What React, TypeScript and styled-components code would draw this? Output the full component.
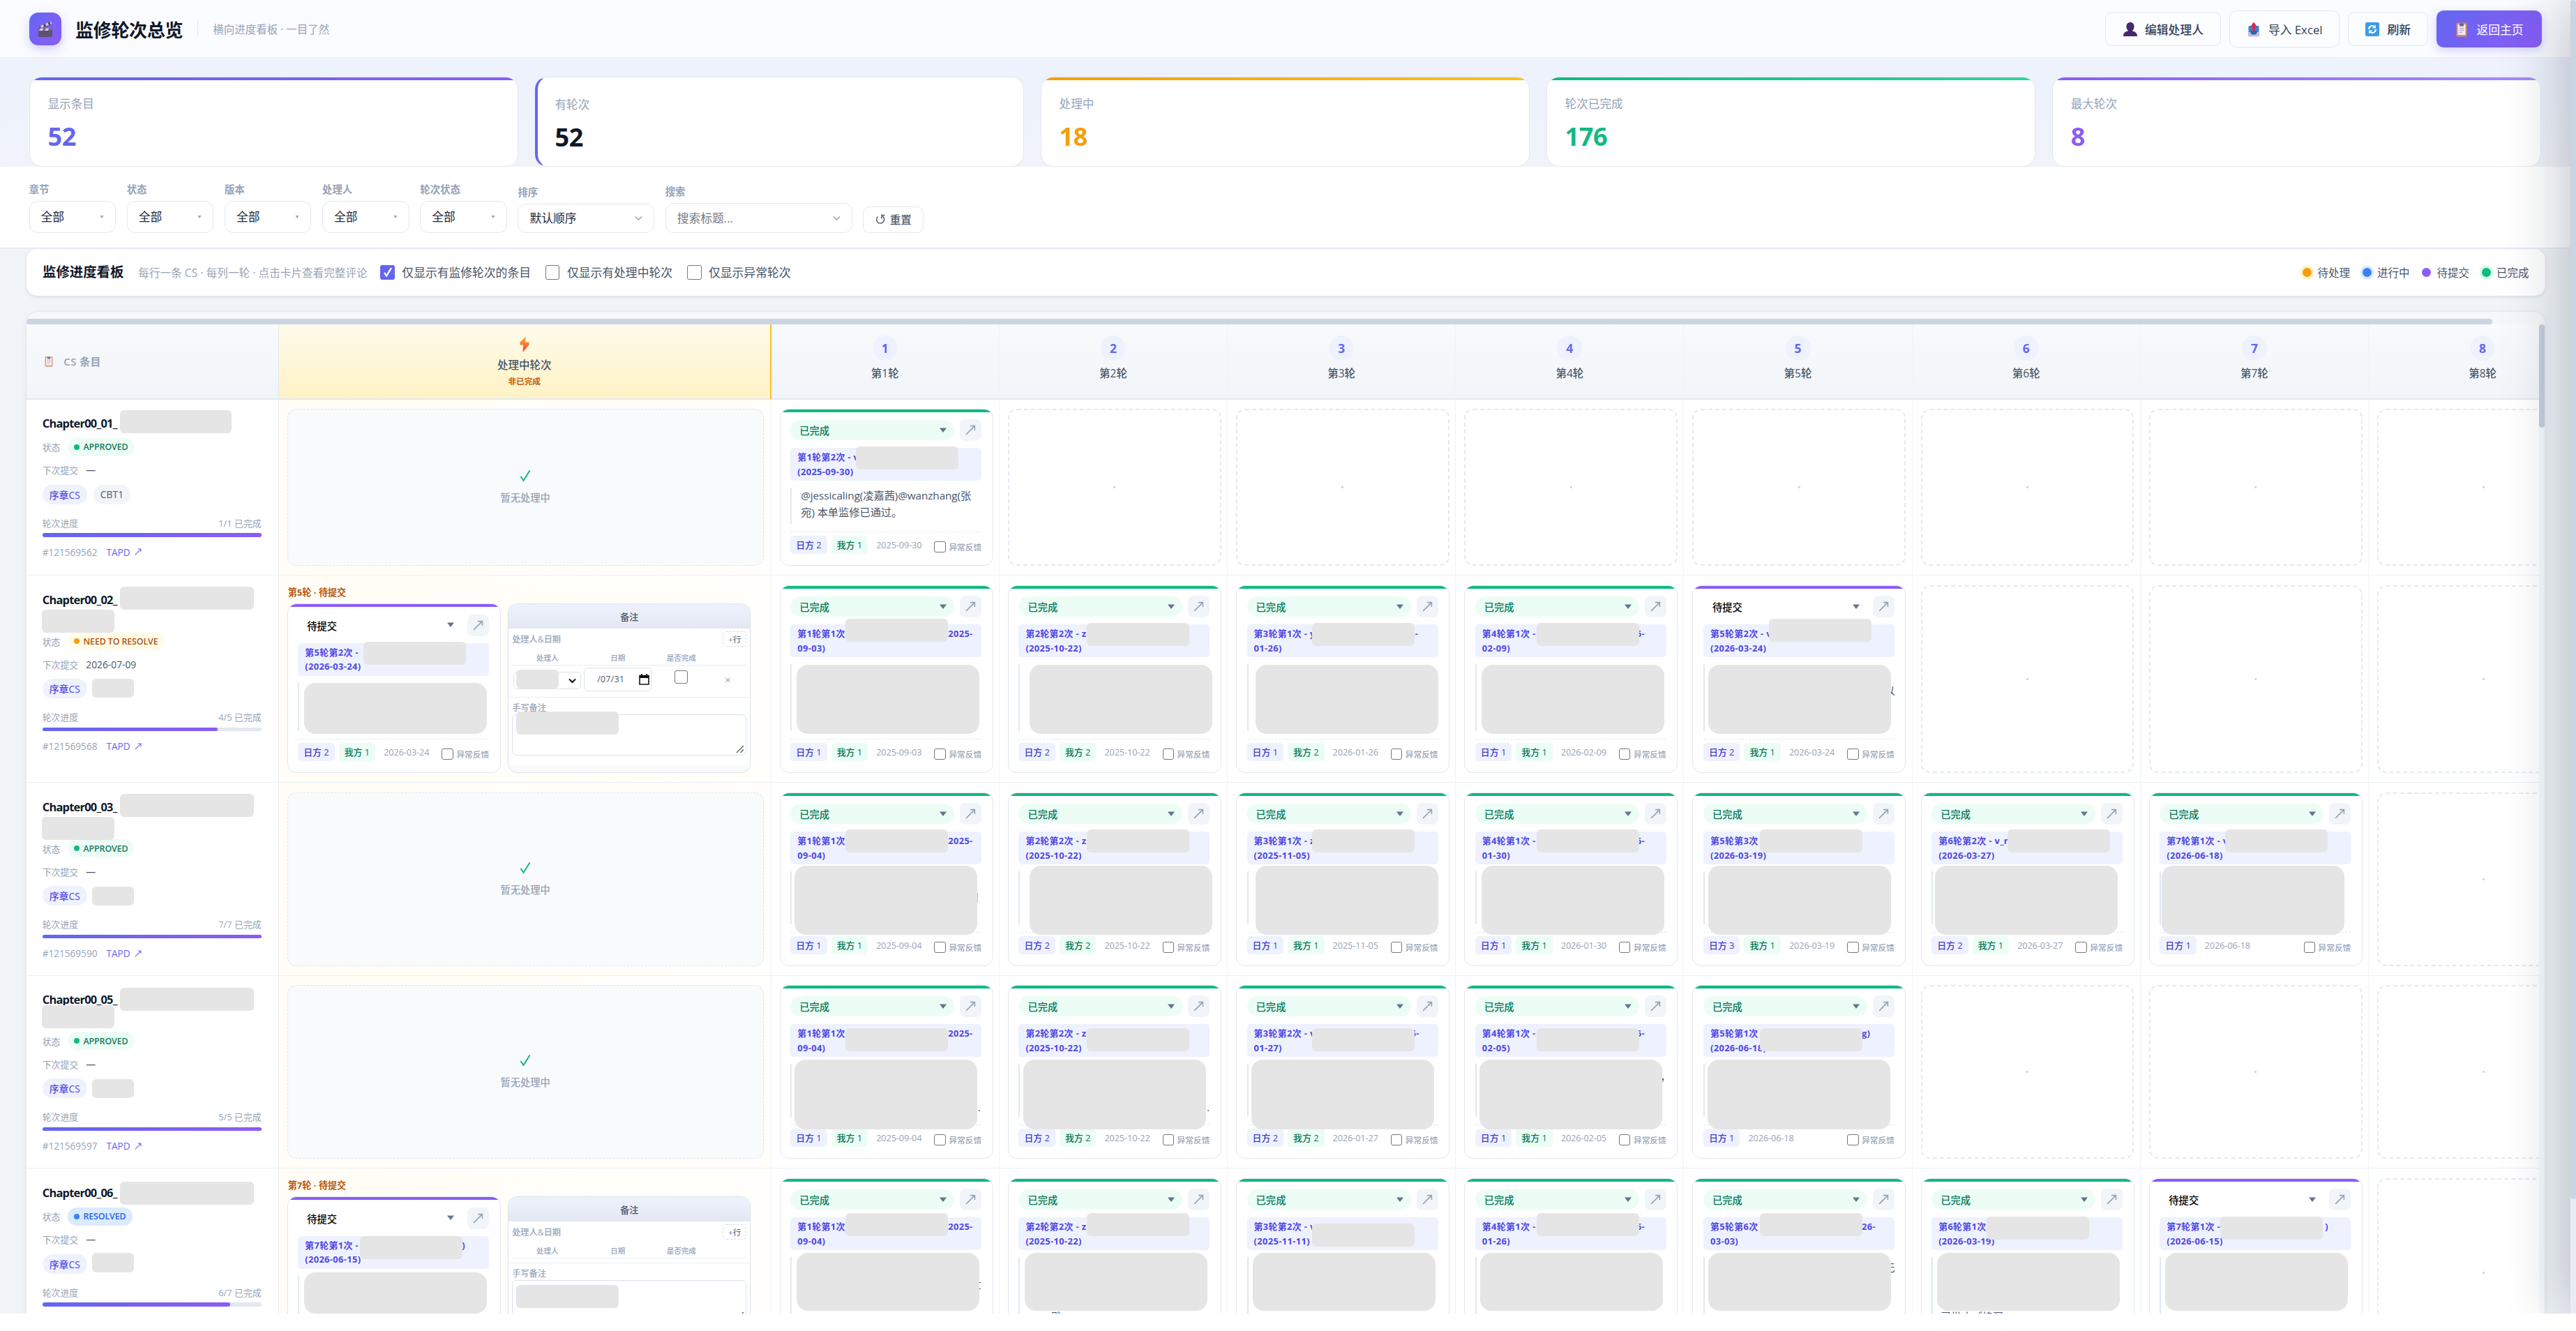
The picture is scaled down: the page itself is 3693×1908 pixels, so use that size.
import React from "react";
import styled, { createGlobalStyle, css } from "styled-components";

const GlobalStyle = createGlobalStyle`
  * { box-sizing: border-box; }
  html, body { margin: 0; padding: 0; background: #fff; }
  body {
    font-family: "Open Sans", "Noto Sans", "Noto Sans CJK SC", sans-serif;
    color: #0f172a;
    overflow: hidden;
  }
`;

/* ---------- page frame ---------- */

const Page = styled.div`
  position: relative;
  width: 3693px;
  height: 1883px;
  overflow: hidden;
  display: flex;
  background: #f1f5f9;
`;

const Main = styled.main`
  width: 3685px;
  flex: none;
  display: flex;
  flex-direction: column;
  background: linear-gradient(180deg, #eef2ff 0, #edf2fc 110px, #f0f3f9 240px, #f0f4f8 400px);
`;

const PageScroll = styled.div`
  width: 8px;
  flex: none;
  background: #e9edf3;
`;

const PageThumb = styled.div`
  height: 1719px;
  border-radius: 4px;
  background: #cbd5e1;
`;

const DrawerShadow = styled.div`
  position: absolute;
  left: 3685px;
  top: 0;
  width: 400px;
  height: 1883px;
  clip-path: inset(-10px 400px -10px -300px);
  box-shadow: -10px 0 78px rgba(15, 23, 42, 0.25);
  pointer-events: none;
`;

/* ---------- header ---------- */

const Header = styled.header`
  height: 83px;
  flex: none;
  display: flex;
  align-items: center;
  padding: 1px 41.5px 0;
  background: #fbfcff;
  border-bottom: 1px solid #e8ecf3;
`;

const Logo = styled.div`
  width: 46.5px;
  height: 46.5px;
  border-radius: 13px;
  display: grid;
  place-items: center;
  background: linear-gradient(135deg, #6366f1, #8b5cf6);
  box-shadow: 0 5px 15px rgba(99, 102, 241, 0.3);
`;

const Title = styled.h1`
  margin: 2px 0 0 20px;
  font-size: 26px;
  line-height: 36px;
  font-weight: 700;
  letter-spacing: -0.3px;
  color: #0f172a;
`;

const Subtitle = styled.span`
  margin-left: 21px;
  padding-left: 21px;
  border-left: 1.3px solid #e2e8f0;
  font-size: 15.5px;
  line-height: 24px;
  color: #94a3b8;
`;

const Actions = styled.div`
  margin-left: auto;
  display: flex;
  align-items: center;
  gap: 11.5px;
`;

const ActionButton = styled.button<{ $w: number; $tall?: boolean; $primary?: boolean; $strong?: boolean }>`
  width: ${(p) => p.$w}px;
  height: ${(p) => (p.$tall ? 53.5 : 48.5)}px;
  padding: 0;
  display: flex;
  align-items: center;
  justify-content: center;
  gap: 10px;
  border-radius: 10px;
  border: 1.3px solid #e2e8f0;
  background: #fcfdff;
  font-family: inherit;
  font-size: 16.8px;
  font-weight: ${(p) => (p.$strong ? 500 : 400)};
  color: #334155;
  white-space: nowrap;
  ${(p) =>
    p.$primary &&
    css`
      border: 0;
      color: #fff;
      background: linear-gradient(135deg, #6366f1, #8b5cf6);
      box-shadow: 0 4px 14px rgba(99, 102, 241, 0.3);
    `}
`;

/* ---------- stats ---------- */

const Stats = styled.section`
  display: grid;
  grid-template-columns: repeat(5, 1fr);
  gap: 23.2px;
  padding: 27px 41.5px 0;
  height: 156px;
  flex: none;
`;

const StatCard = styled.div<{ $bar?: string; $side?: boolean }>`
  height: 129px;
  border: 1.3px solid #e2e8f0;
  border-radius: 18px;
  overflow: hidden;
  padding: ${(p) => (p.$bar ? "0" : "5px")} 26px 0;
  background: #fff;
  ${(p) => p.$side && "border-left: 4px solid #6366f1; padding-left: 25px;"}
  &::before {
    content: "";
    display: ${(p) => (p.$bar ? "block" : "none")};
    height: 5px;
    margin: -1px -27px 1px;
    background: ${(p) => p.$bar};
  }
`;

const StatLabel = styled.div`
  margin-top: 20.5px;
  font-size: 16.6px;
  line-height: 26px;
  color: #94a3b8;
`;

const StatValue = styled.div<{ $c: string }>`
  margin-top: 8px;
  font-size: 36px;
  line-height: 52px;
  font-weight: 700;
  font-family: "Noto Sans", sans-serif;
  letter-spacing: -0.4px;
  color: ${(p) => p.$c};
`;

/* ---------- filters ---------- */

const Filters = styled.section`
  height: 117px;
  flex: none;
  display: flex;
  align-items: flex-end;
  gap: 15.7px;
  padding: 0 41.5px 21px;
  background: #fff;
  border-bottom: 1.5px solid #dfe5ef;
`;

const Field = styled.label<{ $w: number }>`
  width: ${(p) => p.$w}px;
  display: flex;
  flex-direction: column;
  gap: 6px;
  font-size: 14.4px;
  line-height: 20px;
  font-weight: 600;
  color: #94a3b8;
`;

const FieldBox = styled.span<{ $h: number; $muted?: boolean }>`
  height: ${(p) => p.$h}px;
  display: flex;
  align-items: center;
  justify-content: space-between;
  padding: 0 16px;
  border: 1.3px solid #e2e8f0;
  border-radius: 12px;
  background: #fff;
  font-size: 16.8px;
  font-weight: 400;
  color: ${(p) => (p.$muted ? "#757b85" : "#1e293b")};
`;

const ResetButton = styled.button`
  width: 87px;
  height: 38.5px;
  padding: 0;
  display: flex;
  align-items: center;
  justify-content: center;
  gap: 7px;
  border: 1.3px solid #e2e8f0;
  border-radius: 9px;
  background: #fff;
  font: 500 15.5px "Open Sans", "Noto Sans CJK SC", sans-serif;
  color: #475569;
`;

/* ---------- board toolbar ---------- */

const Toolbar = styled.section`
  height: 67.5px;
  flex: none;
  margin: 0.5px 36.5px 0 38px;
  padding: 0 23px;
  display: flex;
  align-items: center;
  border-radius: 15px;
  background: #fff;
  box-shadow: 0 1.3px 4px rgba(15, 23, 42, 0.1);
`;

const ToolbarTitle = styled.h2`
  margin: 0;
  font-size: 19.4px;
  font-weight: 700;
  line-height: 28px;
`;

const ToolbarHint = styled.span`
  width: 326px;
  margin: 0 21px;
  font-size: 15.5px;
  letter-spacing: 0.1px;
  color: #94a3b8;
  white-space: nowrap;
`;

const Check = styled.label`
  display: flex;
  align-items: center;
  gap: 10.5px;
  margin-right: 21px;
  font-size: 16.8px;
  color: #475569;
`;

const Box = styled.span<{ $s: number; $on?: boolean }>`
  width: ${(p) => p.$s}px;
  height: ${(p) => p.$s}px;
  flex: none;
  display: grid;
  place-items: center;
  border-radius: 3px;
  border: ${(p) => (p.$on ? "0" : "1.4px solid #767676")};
  background: ${(p) => (p.$on ? "#6366f1" : "#fff")};
`;

const PersonDone = styled(Box)`
  margin-top: 7px;
`;

const Legend = styled.div`
  margin-left: auto;
  display: flex;
  gap: 18px;
`;

const LegendItem = styled.span<{ $c: string; $ring: string }>`
  display: flex;
  align-items: center;
  gap: 8px;
  font-size: 15.5px;
  color: #475569;
  &::before {
    content: "";
    width: 13px;
    height: 13px;
    border-radius: 50%;
    background: ${(p) => p.$c};
    box-shadow: 0 0 0 3.5px ${(p) => p.$ring};
  }
`;

/* ---------- board ---------- */

const Board = styled.section`
  flex: none;
  margin: 22px 36.5px 0 36.7px;
  height: 1600px;
  border: 1.3px solid #e2e8f0;
  border-radius: 18px;
  overflow: hidden;
  background: #f8fafc;
  box-shadow: 0 2px 8px rgba(15, 23, 42, 0.06);
`;

const TopScroll = styled.div`
  height: 17.7px;
  padding-top: 10px;
  background: #f5f8fa;
`;

const TopThumb = styled.div`
  width: 3535px;
  height: 7.7px;
  border-radius: 4px;
  background: #cbd5e1;
`;

const BoardBody = styled.div`
  display: flex;
`;

const Table = styled.div`
  width: 3602px;
  overflow: hidden;
  background: #fff;
`;

const SideThumb = styled.div`
  width: 8px;
  height: 148px;
  border-radius: 4px;
  background: #c5cfdc;
`;

const RowGrid = styled.div<{ $h: number }>`
  display: grid;
  width: 3686px;
  height: ${(p) => p.$h}px;
  grid-template-columns: 362px 706px repeat(8, 327.2px);
`;

const HeadCell = styled.div<{ $kind?: "item" | "active" }>`
  display: flex;
  flex-direction: column;
  align-items: center;
  padding-top: 16px;
  border-bottom: 2.6px solid #e2e8f0;
  border-right: 1.3px solid #eff3f8;
  background: linear-gradient(180deg, #f8fafc, #f1f5f9);
  font-size: 15.5px;
  line-height: 22px;
  font-weight: 500;
  color: #475569;
  ${(p) =>
    p.$kind === "item" &&
    css`
      flex-direction: row;
      padding: 0 0 0 24px;
      gap: 13.5px;
      color: #94a3b8;
      font-weight: 600;
      border-right-color: #e2e8f0;
      letter-spacing: 0.5px;
      font-size: 14.9px;
    `}
  ${(p) =>
    p.$kind === "active" &&
    css`
      background: linear-gradient(180deg, #fffbeb, #fef3c7 95%);
      border-right: 2px solid #fbbf24;
    `}
`;

const RoundBadge = styled.span`
  width: 36px;
  height: 36px;
  margin-bottom: 7px;
  border-radius: 50%;
  display: grid;
  place-items: center;
  background: #eef2ff;
  font-size: 17.4px;
  font-weight: 700;
  color: #6366f1;
`;

const ActiveTitle = styled.span`
  margin-top: 6px;
`;

const ActiveNote = styled.span`
  margin-top: 4px;
  font-size: 11.6px;
  line-height: 18px;
  font-weight: 700;
  color: #c2590c;
`;

const Cell = styled.div<{ $top: number; $warm?: boolean }>`
  display: flex;
  flex-direction: column;
  padding: ${(p) => p.$top}px 9.5px 12.5px 12px;
  border-right: 1.3px solid #eff3f8;
  border-bottom: 1.3px solid #eaf0f7;
  background: ${(p) => (p.$warm ? "linear-gradient(90deg, #fffdf5, #fffefa)" : "#fff")};
  ${(p) => p.$warm && "padding-right: 10px;"}
`;

const Redact = styled.span<{ $x: number; $y: number; $w: number; $h: number; $r?: number }>`
  position: absolute;
  left: ${(p) => p.$x}px;
  top: ${(p) => p.$y}px;
  width: ${(p) => p.$w}px;
  height: ${(p) => p.$h}px;
  border-radius: ${(p) => p.$r ?? 6}px;
  background: #e5e5e5;
`;

/* item column */

const ItemCell = styled.div<{ $top: number }>`
  position: relative;
  padding: ${(p) => p.$top}px 24px 0 23px;
  border-right: 1.3px solid #e6ebf2;
  border-bottom: 1.3px solid #eaf0f7;
  background: #fff;
`;

const ItemTitle = styled.div<{ $lines: number }>`
  height: ${(p) => p.$lines * 25.5}px;
  font-size: 16.4px;
  line-height: 25px;
  font-weight: 700;
  letter-spacing: -0.75px;
`;

const ItemLine = styled.div<{ $mt: number; $h: number; $size?: number }>`
  margin-top: ${(p) => p.$mt}px;
  height: ${(p) => p.$h}px;
  display: flex;
  align-items: center;
  font-size: ${(p) => p.$size ?? 12.9}px;
  color: #94a3b8;
  white-space: nowrap;
`;

const NextDate = styled.span`
  margin-left: 11px;
  font-size: 13.8px;
  color: #475569;
`;

const ProgressCount = styled.span`
  margin-left: auto;
`;

const statusTones = {
  APPROVED: ["#ecfdf5", "#10b981", "#15795c"],
  "NEED TO RESOLVE": ["#fffbeb", "#f59e0b", "#b45309"],
  RESOLVED: ["#dbeafe", "#3b82f6", "#2563eb"],
} as const;

const StatusPill = styled.span<{ $s: keyof typeof statusTones }>`
  height: 26px;
  margin-left: 11px;
  padding: 0 9px;
  display: flex;
  align-items: center;
  gap: 5px;
  border-radius: 13px;
  background: ${(p) => statusTones[p.$s][0]};
  color: ${(p) => statusTones[p.$s][2]};
  font-size: 12.4px;
  font-weight: 600;
  letter-spacing: -0.1px;
  &::before {
    content: "";
    width: 8px;
    height: 8px;
    border-radius: 50%;
    background: ${(p) => statusTones[p.$s][1]};
  }
`;

const Tag = styled.span<{ $plain?: boolean }>`
  height: 28px;
  padding: 0 10px;
  margin-right: 9px;
  display: flex;
  align-items: center;
  border-radius: 14px;
  font-size: 13.9px;
  font-weight: 500;
  background: ${(p) => (p.$plain ? "#f1f5f9" : "#eef2ff")};
  color: ${(p) => (p.$plain ? "#475569" : "#4f46e5")};
`;

const Track = styled.div`
  margin-top: 6px;
  height: 5.4px;
  border-radius: 3px;
  background: #e2e8f0;
`;

const Fill = styled.div`
  height: 100%;
  border-radius: 3px;
  background: linear-gradient(90deg, #6366f1, #8b5cf6);
`;

const TicketLink = styled.span`
  margin-left: 13px;
  display: flex;
  align-items: center;
  gap: 6px;
  font-weight: 500;
  color: #6366f1;
`;

/* empty states */

const EmptyRound = styled.div`
  flex: 1;
  display: grid;
  place-items: center;
  border: 2px dashed #e4e9f1;
  border-radius: 13px;
  margin-right: -1px;
  &::after {
    content: "";
    width: 3px;
    height: 3px;
    border-radius: 1px;
    background: #cbd5e1;
  }
`;

const EmptyActive = styled.div`
  flex: 1;
  display: flex;
  flex-direction: column;
  align-items: center;
  justify-content: center;
  gap: 11px;
  padding-top: 3px;
  border: 1.3px dashed #dde4ee;
  border-radius: 13px;
  background: #f8fafc;
  font-size: 14.3px;
  line-height: 24px;
  font-weight: 500;
  color: #94a3b8;
`;

/* round card */

const Card = styled.article<{ $c: string }>`
  position: relative;
  width: 306px;
  flex: 1;
  display: flex;
  flex-direction: column;
  padding: 0 15.5px 16px 14.5px;
  border: 1.3px solid #e0e6ef;
  border-radius: 13px;
  overflow: hidden;
  background: #fff;
  &::before {
    content: "";
    flex: none;
    height: 5px;
    margin: -1px -16px 11.3px;
    background: ${(p) => p.$c};
  }
`;

const CardTop = styled.div`
  flex: none;
  height: 30px;
  display: flex;
  align-items: center;
  gap: 8px;
`;

const RoundSelect = styled.div<{ $done: boolean }>`
  flex: 1;
  height: 29px;
  padding: 0 11px 0 13px;
  display: flex;
  align-items: center;
  justify-content: space-between;
  border-radius: 15px;
  background: ${(p) => (p.$done ? "#ecfdf5" : "#fff")};
  color: ${(p) => (p.$done ? "#047857" : "#000")};
  font-size: 14.3px;
  font-weight: 500;
`;

const OpenButton = styled.span`
  width: 31px;
  height: 31px;
  display: grid;
  place-items: center;
  border-radius: 8px;
  background: #f1f5f9;
`;

const CommentHead = styled.div`
  flex: none;
  height: 47px;
  margin-top: 10.5px;
  padding: 3px 10px;
  border-radius: 5px;
  background: #eef2ff;
  font-size: 12.9px;
  line-height: 20.5px;
  font-weight: 700;
  letter-spacing: 0.36px;
  color: #4f46e5;
`;

const HeadLine = styled.div`
  display: flex;
  white-space: pre;
`;

const HeadLead = styled.span<{ $w?: number }>`
  flex: none;
  ${(p) => p.$w && `width: ${p.$w}px;`}
`;

const CommentBody = styled.div`
  flex: 1;
  min-height: 0;
  margin-top: 10px;
  padding: 0 6px 0 13px;
  border-left: 2px solid #e2e8f0;
  font-size: 15.3px;
  line-height: 23.4px;
  letter-spacing: -0.1px;
  white-space: pre;
  color: #475569;
`;

const Peek = styled.span<{ $x: number; $y: number }>`
  position: absolute;
  left: ${(p) => p.$x}px;
  top: ${(p) => p.$y}px;
  font-size: 15px;
  line-height: 20px;
  white-space: nowrap;
  color: #475569;
`;

const CardFoot = styled.div`
  flex: none;
  margin-top: 11px;
  padding-top: 5px;
  height: 32.5px;
  display: flex;
  align-items: center;
  border-top: 1.3px dashed #e2e8f0;
  white-space: nowrap;
`;

const Chip = styled.span<{ $own?: boolean }>`
  height: 26px;
  padding: 0 8px;
  margin-right: 6px;
  display: flex;
  align-items: center;
  border-radius: 5px;
  font-size: 12.9px;
  font-weight: 500;
  background: ${(p) => (p.$own ? "#ecfdf5" : "#eef2ff")};
  color: ${(p) => (p.$own ? "#047857" : "#4338ca")};
`;

const FootDate = styled.span`
  margin-left: 6px;
  font-size: 12.7px;
  letter-spacing: -0.1px;
  color: #94a3b8;
`;

const Abnormal = styled.span`
  margin-left: auto;
  padding-top: 6px;
  display: flex;
  align-items: center;
  gap: 4.5px;
  font-size: 11.7px;
  font-weight: 500;
  color: #94a3b8;
`;

/* in-progress column */

const ActiveLabel = styled.div`
  height: 26.5px;
  flex: none;
  padding-left: 1px;
  font-size: 13.1px;
  line-height: 20px;
  font-weight: 700;
  color: #b9560c;
`;

const ActiveRow = styled.div`
  flex: 1;
  min-height: 0;
  display: flex;
  gap: 10.5px;
  & > article {
    flex: none;
  }
`;

const Notes = styled.div`
  position: relative;
  width: 348px;
  flex: none;
  border: 1.3px solid #dbe2ec;
  border-radius: 13px;
  overflow: hidden;
  background: #f8fafc;
`;

const NotesHead = styled.div`
  height: 35px;
  display: grid;
  place-items: center;
  background: linear-gradient(180deg, #eef2ff, #e2e8f0);
  font-size: 13px;
  font-weight: 500;
  color: #475569;
`;

const NotesBody = styled.div`
  height: 195px;
  padding: 4px 5px 0;
  background: #fff;
  font-size: 12.2px;
  font-weight: 500;
  color: #94a3b8;
`;

const NotesBar = styled.div`
  height: 22px;
  display: flex;
  align-items: center;
  justify-content: space-between;
`;

const AddRow = styled.span`
  width: 34px;
  height: 22px;
  display: grid;
  place-items: center;
  border: 1.2px dashed #d3dbe6;
  border-radius: 5px;
  font-size: 11.6px;
  color: #64748b;
`;

const PeopleGrid = styled.div<{ $h: number; $head?: boolean }>`
  height: ${(p) => p.$h}px;
  display: grid;
  grid-template-columns: 101px 101px 81px 52px;
  align-items: ${(p) => (p.$head ? "center" : "start")};
  justify-items: center;
  font-size: 10.5px;
  ${(p) => p.$head && "border-bottom: 1.3px solid #e8edf4; padding-top: 5px;"}
`;

const PersonSelect = styled.span`
  width: 97px;
  height: 25px;
  margin-top: 9px;
  padding-right: 6px;
  display: flex;
  align-items: center;
  justify-content: flex-end;
  border: 1.3px solid #dbe2ec;
  border-radius: 5px;
`;

const DateInput = styled.span`
  width: 97px;
  height: 34.5px;
  margin-top: 2.5px;
  padding: 0 2px 0 18px;
  display: flex;
  align-items: center;
  justify-content: space-between;
  border: 1.3px solid #dbe2ec;
  border-radius: 5px;
  font-size: 12.2px;
  font-weight: 400;
  letter-spacing: 0.4px;
  color: #475569;
`;

const RemoveMark = styled.span`
  margin-top: 10px;
  font-size: 15px;
  line-height: 20px;
`;

const HandNotes = styled.div`
  margin: 0 -5px;
  padding: 5px 5px 0;
  border-top: 1.3px solid #e8edf4;
  line-height: 19px;
`;

const TextArea = styled.div`
  height: 59.5px;
  display: flex;
  align-items: flex-end;
  justify-content: flex-end;
  padding: 2px;
  border: 1.3px solid #dbe2ec;
  border-radius: 6px;
`;

/* ---------- drawings ---------- */

const Clapper = () => (
  <svg width="20" height="24" viewBox="0 0 20 24">
    <rect x="0" y="10" width="20" height="13" rx="2" fill="#5f5075" />
    <path d="M0 10h20v4H0z" fill="#75658c" />
    <path d="M1 8 17 1l2 4L3 11z" fill="#53456a" />
    <path d="m3 7 4-1.700 1 3.200-4 1.500zm7-3 3.500-1.500 1.500 3.200-4 1.500zm6.500-2.800L18 1l1.500 3.500-2 .5zM3 10.500h4.500L5.500 14H1zm8 0h4.500L13.500 14H9z" fill="#d9cdec" />
  </svg>
);
const Person = () => (
  <svg width="22" height="22" viewBox="0 0 22 22">
    <path d="M11 1c3.400 0 5.600 2.400 5.600 6 0 2.300-.9 4.300-2.200 5.500v1.200c4 .6 6.600 3 6.600 7.300H1c0-4.300 2.600-6.700 6.600-7.300v-1.200C6.300 11.300 5.400 9.300 5.400 7c0-3.600 2.200-6 5.600-6z" fill="#46286e" />
  </svg>
);
const Inbox = () => (
  <svg width="22" height="22" viewBox="0 0 22 22">
    <rect x="3.500" y="6" width="15" height="12" rx="1.500" fill="#2f86d8" />
    <path d="M3 15h16v5a1.500 1.500 0 0 1-1.500 1.500h-13A1.500 1.500 0 0 1 3 20z" fill="#c9bcd6" />
    <path d="M6.500 13h9v3.500l-2 2h-5l-2-2z" fill="#2268b5" />
    <path d="M11 .5 15.500 7H13v6H9V7H6.500z" fill="#e0244f" />
  </svg>
);
const RefreshIcon = () => (
  <svg width="22" height="22" viewBox="0 0 22 22">
    <rect x="1" y="1" width="20" height="20" rx="2.500" fill="#3d9be9" />
    <path d="M6 11a5 5 0 0 1 8.500-3.500M16 11a5 5 0 0 1-8.500 3.500" fill="none" stroke="#fff" strokeWidth="2" />
    <path d="M15.800 4.500v5h-5zM6.200 17.500v-5h5z" fill="#fff" />
  </svg>
);
const Clipboard = ({ size = 22, faded = false }: { size?: number; faded?: boolean }) => (
  <svg width={size} height={size} viewBox="0 0 22 22" opacity={faded ? 0.8 : 1}>
    <rect x="3.500" y="1.500" width="15" height="20" rx="1.500" fill="#d98a5b" />
    <rect x="5.500" y="4" width="11" height="15" fill="#f3ecf7" />
    <path d="M7.500 9.500h7M7.500 12.500h7M7.500 15.500h4.500" stroke="#b9a9c6" strokeWidth="1.300" />
    <path d="M8 3h1.500a1.500 1.500 0 0 1 3 0H14v3.500H8z" fill="#6c5f7d" />
  </svg>
);
const Bolt = () => (
  <svg width="18" height="25" viewBox="0 0 18 25">
    <defs>
      <linearGradient id="bolt" x1="0" y1="0" x2="0" y2="1">
        <stop offset="0" stopColor="#fcb32c" />
        <stop offset="1" stopColor="#f4433f" />
      </linearGradient>
    </defs>
    <path d="M11 1 2.500 9.500V13.500H7L6.500 24 15.500 13.500V9.500H10z" fill="url(#bolt)" />
  </svg>
);
const Caret = () => (
  <svg width="10" height="8" viewBox="0 0 10 8">
    <path d="M0 .5h10L5 7z" fill="#64748b" />
  </svg>
);
const TinyCaret = () => (
  <svg width="6" height="6" viewBox="0 0 6 6">
    <path d="M.5 1h5L3 5z" fill="#94a3b8" />
  </svg>
);
const Chevron = ({ c = "#94a3b8", w = 1.5 }: { c?: string; w?: number }) => (
  <svg width="11" height="8" viewBox="0 0 11 8">
    <path d="m1 1.500 4.500 4.500L10 1.500" fill="none" stroke={c} strokeWidth={w} />
  </svg>
);
const Arrow = ({ s = 15, c = "#94a3b8" }: { s?: number; c?: string }) => (
  <svg width={s} height={s} viewBox="0 0 14 14">
    <path d="M1 13 12.500 1.500M6.500 1.500h6v6" fill="none" stroke={c} strokeWidth="1.500" />
  </svg>
);
const Tick = ({ w, h, c, sw }: { w: number; h: number; c: string; sw: number }) => (
  <svg width={w} height={h} viewBox="0 0 16 18">
    <path d="M1.500 10 5.500 16 14.500 1.500" fill="none" stroke={c} strokeWidth={sw} />
  </svg>
);
const Calendar = () => (
  <svg width="15" height="16" viewBox="0 0 15 16">
    <path d="M1 2.500h13v12.500H1z" fill="none" stroke="#111" strokeWidth="1.600" />
    <path d="M1 2h13v4H1zM3 0h1.800v3H3zm7.200 0H12v3h-1.800z" fill="#111" />
  </svg>
);
const Grip = () => (
  <svg width="12" height="12" viewBox="0 0 12 12">
    <path d="M1 11 11 1M6.500 11 11 6.500" stroke="#555" strokeWidth="1.200" />
  </svg>
);
const ResetArrow = () => (
  <svg width="14" height="16" viewBox="0 0 14 16">
    <path d="M3.500 3.500a5.500 5.500 0 1 0 6.500-.6" fill="none" stroke="#475569" strokeWidth="1.400" />
    <path d="M9 6.500V1.500h4.500" fill="none" stroke="#475569" strokeWidth="1.400" />
  </svg>
);

/* ---------- data ---------- */

const GREEN = "#10b981";
const PURPLE = "#8b5cf6";

type Round = {
  lead: string;
  tail?: string;
  tailAt?: number;
  second: string;
  foot?: { jp: number; own?: number; date: string };
  pending?: boolean;
  name: [number, number];
  body?: [number, number, number];
  text?: string;
  peek?: [string, number, number];
};

type Item = {
  title: string;
  status: keyof typeof statusTones;
  next: string;
  extraTag?: string;
  done: number;
  total: number;
  id?: string;
  height: number;
  top: number;
  masks: [number, number, number, number][];
  active?: { label: string; round: Round; person: boolean };
  rounds: Round[];
};

const items: Item[] = [
  {
    title: "Chapter00_01_", status: "APPROVED", next: "—", extraTag: "CBT1", done: 1, total: 1, id: "#121569562",
    height: 252, top: 13, masks: [[134, 15, 160, 33]],
    rounds: [
      { lead: "第1轮第2次 - v", second: "(2025-09-30)", foot: { jp: 2, own: 1, date: "2025-09-30" }, name: [108, 53], text: "@jessicaling(凌嘉茜)@wanzhang(张\n宛) 本单监修已通过。" },
    ],
  },
  {
    title: "Chapter00_02_", status: "NEED TO RESOLVE", next: "2026-07-09", done: 4, total: 5, id: "#121569568",
    height: 297, top: 14, masks: [[134, 16, 192, 33], [22, 49, 104, 33], [94, 148, 60, 27]],
    active: {
      label: "第5轮 · 待提交", person: true,
      round: { lead: "第5轮第2次 -", tail: ")", tailAt: 225, second: "(2026-03-24)", foot: { jp: 2, own: 1, date: "2026-03-24" }, pending: true, name: [108, 54], body: [23, 113, 73] },
    },
    rounds: [
      { lead: "第1轮第1次", tail: "2025-", tailAt: 216, second: "09-03)", foot: { jp: 1, own: 1, date: "2025-09-03" }, name: [93, 47], body: [23, 113, 99] },
      { lead: "第2轮第2次 - z", second: "(2025-10-22)", foot: { jp: 2, own: 2, date: "2025-10-22" }, name: [112, 53], body: [30, 113, 99] },
      { lead: "第3轮第1次 - y", tail: "-", tailAt: 231, second: "01-26)", foot: { jp: 1, own: 2, date: "2026-01-26" }, name: [108, 53], body: [27, 113, 99] },
      { lead: "第4轮第1次 -", tail: "6-", tailAt: 221, second: "02-09)", foot: { jp: 1, own: 1, date: "2026-02-09" }, name: [103, 53], body: [24, 113, 99] },
      { lead: "第5轮第2次 - v", second: "(2026-03-24)", foot: { jp: 2, own: 1, date: "2026-03-24" }, pending: true, name: [109, 47], body: [22, 113, 99], peek: ["以", 274, 140] },
    ],
  },
  {
    title: "Chapter00_03_", status: "APPROVED", next: "—", done: 7, total: 7, id: "#121569590",
    height: 277, top: 14, masks: [[134, 16, 192, 33], [22, 49, 104, 33], [94, 149, 60, 27]],
    rounds: [
      { lead: "第1轮第1次", tail: "2025-", tailAt: 216, second: "09-04)", foot: { jp: 1, own: 1, date: "2025-09-04" }, name: [93, 52], body: [20, 104, 99], peek: ["日", 270, 139] },
      { lead: "第2轮第2次 - z", second: "(2025-10-22)", foot: { jp: 2, own: 2, date: "2025-10-22" }, name: [112, 52], body: [30, 104, 99] },
      { lead: "第3轮第1次 - z", second: "(2025-11-05)", foot: { jp: 1, own: 1, date: "2025-11-05" }, name: [108, 52], body: [27, 104, 99] },
      { lead: "第4轮第1次 -", tail: "6-", tailAt: 221, second: "01-30)", foot: { jp: 1, own: 1, date: "2026-01-30" }, name: [103, 52], body: [24, 104, 99] },
      { lead: "第5轮第3次", second: "(2026-03-19)", foot: { jp: 3, own: 1, date: "2026-03-19" }, name: [96, 52], body: [22, 104, 99] },
      { lead: "第6轮第2次 - v_n", second: "(2026-03-27)", foot: { jp: 2, own: 1, date: "2026-03-27" }, name: [123, 52], body: [19, 104, 99] },
      { lead: "第7轮第1次 - v", second: "(2026-06-18)", foot: { jp: 1, date: "2026-06-18" }, name: [108, 52], body: [17, 104, 99] },
    ],
  },
  {
    title: "Chapter00_05_", status: "APPROVED", next: "—", done: 5, total: 5, id: "#121569597",
    height: 276, top: 13, masks: [[134, 17, 192, 33], [22, 42, 104, 33], [94, 148, 60, 27]],
    rounds: [
      { lead: "第1轮第1次", tail: "2025-", tailAt: 216, second: "09-04)", foot: { jp: 1, own: 1, date: "2025-09-04" }, name: [93, 61], body: [20, 106, 100], peek: [".", 283, 164] },
      { lead: "第2轮第2次 - z", second: "(2025-10-22)", foot: { jp: 2, own: 2, date: "2025-10-22" }, name: [112, 61], body: [21, 106, 100], peek: [".", 284, 164] },
      { lead: "第3轮第2次 - v", tail: "6-", tailAt: 225, second: "01-27)", foot: { jp: 2, own: 2, date: "2026-01-27" }, name: [108, 61], body: [21, 106, 100] },
      { lead: "第4轮第1次 -", tail: "6-", tailAt: 221, second: "02-05)", foot: { jp: 1, own: 1, date: "2026-02-05" }, name: [103, 61], body: [21, 106, 100], peek: ["，", 280, 120] },
      { lead: "第5轮第1次", tail: "g)", tailAt: 217, second: "(2026-06-18)", foot: { jp: 1, date: "2026-06-18" }, name: [96, 61], body: [21, 106, 100] },
    ],
  },
  {
    title: "Chapter00_06_", status: "RESOLVED", next: "—", done: 6, total: 7,
    height: 300, top: 14, masks: [[134, 19, 192, 33], [94, 121, 60, 28]],
    active: {
      label: "第7轮 · 待提交", person: false,
      round: { lead: "第7轮第1次 -", tail: ")", tailAt: 225, second: "(2026-06-15)", pending: true, name: [103, 56], body: [23, 108, 59] },
    },
    rounds: [
      { lead: "第1轮第1次", tail: "2025-", tailAt: 216, second: "09-04)", name: [93, 49], body: [23, 106, 83], peek: ["忙", 273, 141] },
      { lead: "第2轮第2次 - z", second: "(2025-10-22)", name: [112, 49], body: [23, 106, 83], peek: ["NG: 雕", 31, 187] },
      { lead: "第3轮第2次 - v", second: "(2025-11-11)", name: [108, 64], body: [23, 106, 83] },
      { lead: "第4轮第1次 -", tail: "6-", tailAt: 221, second: "01-26)", name: [103, 49], body: [22, 106, 83] },
      { lead: "第5轮第6次", tail: "26-", tailAt: 217, second: "03-03)", name: [96, 49], body: [22, 106, 83], peek: ["无", 274, 117] },
      { lead: "第6轮第1次", second: "(2026-03-19)", name: [93, 54], body: [22, 106, 83], peek: ["习世广《终洞", 27, 187] },
      { lead: "第7轮第1次 -", tail: ")", tailAt: 227, second: "(2026-06-15)", pending: true, name: [101, 54], body: [22, 106, 83] },
    ],
  },
];

const stats = [
  { label: "显示条目", value: "52", c: "#6366f1", bar: "linear-gradient(90deg,#6366f1,#8b5cf6)" },
  { label: "有轮次", value: "52", c: "#0f172a" },
  { label: "处理中", value: "18", c: "#f59e0b", bar: "linear-gradient(90deg,#f59e0b,#fbbf24)" },
  { label: "轮次已完成", value: "176", c: "#10b981", bar: "linear-gradient(90deg,#10b981,#34d399)" },
  { label: "最大轮次", value: "8", c: "#8b5cf6", bar: "linear-gradient(90deg,#8b5cf6,#a78bfa)" },
];

/* ---------- composed parts ---------- */

const RoundCard = ({ r }: { r: Round }) => (
  <Card $c={r.pending ? PURPLE : GREEN}>
    <CardTop>
      <RoundSelect $done={!r.pending}>
        {r.pending ? "待提交" : "已完成"}
        <Caret />
      </RoundSelect>
      <OpenButton>
        <Arrow />
      </OpenButton>
    </CardTop>
    <CommentHead>
      <HeadLine>
        <HeadLead $w={r.tailAt}>{r.lead}</HeadLead>
        {r.tail}
      </HeadLine>
      <HeadLine>{r.second}</HeadLine>
    </CommentHead>
    <CommentBody>{r.text}</CommentBody>
    {r.foot && (
      <CardFoot>
        <Chip>日方 {r.foot.jp}</Chip>
        {r.foot.own && <Chip $own>我方 {r.foot.own}</Chip>}
        <FootDate>{r.foot.date}</FootDate>
        <Abnormal>
          <Box $s={16.5} />
          异常反馈
        </Abnormal>
      </CardFoot>
    )}
    {r.peek && <Peek $x={r.peek[1]} $y={r.peek[2]}>{r.peek[0]}</Peek>}
    <Redact $x={r.name[0]} $y={r.name[1]} $w={147} $h={33} />
    {r.body && <Redact $x={r.body[0]} $y={r.body[1]} $w={262} $h={r.body[2]} $r={16} />}
  </Card>
);

const NotesPanel = ({ person }: { person: boolean }) => (
  <Notes>
    <NotesHead>备注</NotesHead>
    <NotesBody>
      <NotesBar>
        处理人&amp;日期
        <AddRow>+行</AddRow>
      </NotesBar>
      <PeopleGrid $h={27} $head>
        <span>处理人</span>
        <span>日期</span>
        <span>是否完成</span>
      </PeopleGrid>
      <PeopleGrid $h={person ? 44.5 : 6}>
        {person && (
          <>
            <PersonSelect>
              <Chevron c="#111" w={2} />
            </PersonSelect>
            <DateInput>
              /07/31
              <Calendar />
            </DateInput>
            <PersonDone $s={18.5} />
            <RemoveMark>×</RemoveMark>
          </>
        )}
      </PeopleGrid>
      <HandNotes>
        手写备注
        <TextArea>
          <Grip />
        </TextArea>
      </HandNotes>
    </NotesBody>
    {person && <Redact $x={11} $y={94} $w={61} $h={27} />}
    <Redact $x={11} $y={person ? 154 : 126} $w={147} $h={33} />
  </Notes>
);

const ItemInfo = ({ it }: { it: Item }) => (
  <ItemCell $top={it.top + 8.5}>
    <ItemTitle $lines={it.masks.length === 3 ? 2 : 1}>{it.title}</ItemTitle>
    <ItemLine $mt={8} $h={26}>
      状态<StatusPill $s={it.status}>{it.status}</StatusPill>
    </ItemLine>
    <ItemLine $mt={9} $h={22}>
      下次提交<NextDate>{it.next}</NextDate>
    </ItemLine>
    <ItemLine $mt={10} $h={28}>
      <Tag>序章CS</Tag>
      {it.extraTag && <Tag $plain>{it.extraTag}</Tag>}
    </ItemLine>
    <ItemLine $mt={17.5} $h={18}>
      轮次进度<ProgressCount>{it.done}/{it.total} 已完成</ProgressCount>
    </ItemLine>
    <Track>
      <Fill style={{ width: `${(it.done / it.total) * 100}%` }} />
    </Track>
    {it.id && (
      <ItemLine $mt={11.5} $h={20} $size={13.6}>
        {it.id}
        <TicketLink>
          TAPD <Arrow s={10} c="#6366f1" />
        </TicketLink>
      </ItemLine>
    )}
    {it.masks.map(([x, y, w, h], i) => (
      <Redact key={i} $x={x} $y={y} $w={w} $h={h} />
    ))}
  </ItemCell>
);

export default function App() {
  return (
    <>
      <GlobalStyle />
      <Page>
        <Main>
          <Header>
            <Logo>
              <Clapper />
            </Logo>
            <Title>监修轮次总览</Title>
            <Subtitle>横向进度看板 · 一目了然</Subtitle>
            <Actions>
              <ActionButton $w={166} $strong><Person />编辑处理人</ActionButton>
              <ActionButton $w={158.5} $tall><Inbox />导入 Excel</ActionButton>
              <ActionButton $w={115.5} $strong><RefreshIcon />刷新</ActionButton>
              <ActionButton $w={151} $tall $primary><Clipboard />返回主页</ActionButton>
            </Actions>
          </Header>

          <Stats>
            {stats.map((s) => (
              <StatCard key={s.label} $bar={s.bar} $side={!s.bar}>
                <StatLabel>{s.label}</StatLabel>
                <StatValue $c={s.c}>{s.value}</StatValue>
              </StatCard>
            ))}
          </Stats>

          <Filters>
            {["章节", "状态", "版本", "处理人", "轮次状态"].map((f) => (
              <Field key={f} $w={124.5}>
                {f}
                <FieldBox $h={46}>全部<TinyCaret /></FieldBox>
              </Field>
            ))}
            <Field $w={195.5}>
              排序
              <FieldBox $h={42}>默认顺序<Chevron /></FieldBox>
            </Field>
            <Field $w={268}>
              搜索
              <FieldBox $h={43} $muted>搜索标题...<Chevron /></FieldBox>
            </Field>
            <ResetButton>
              <ResetArrow />
              重置
            </ResetButton>
          </Filters>

          <Toolbar>
            <ToolbarTitle>监修进度看板</ToolbarTitle>
            <ToolbarHint>每行一条 CS · 每列一轮 · 点击卡片查看完整评论</ToolbarHint>
            <Check><Box $s={20.5} $on><Tick w={14} h={14} c="#fff" sw={3} /></Box>仅显示有监修轮次的条目</Check>
            <Check><Box $s={20.5} />仅显示有处理中轮次</Check>
            <Check><Box $s={20.5} />仅显示异常轮次</Check>
            <Legend>
              <LegendItem $c="#f59e0b" $ring="#fef3c7">待处理</LegendItem>
              <LegendItem $c="#3b82f6" $ring="#dbeafe">进行中</LegendItem>
              <LegendItem $c="#8b5cf6" $ring="transparent">待提交</LegendItem>
              <LegendItem $c="#10b981" $ring="#d1fae5">已完成</LegendItem>
            </Legend>
          </Toolbar>

          <Board>
            <TopScroll>
              <TopThumb />
            </TopScroll>
            <BoardBody>
              <Table>
                <RowGrid $h={108}>
                  <HeadCell $kind="item"><Clipboard size={16} faded />CS 条目</HeadCell>
                  <HeadCell $kind="active">
                    <Bolt />
                    <ActiveTitle>处理中轮次</ActiveTitle>
                    <ActiveNote>非已完成</ActiveNote>
                  </HeadCell>
                  {[1, 2, 3, 4, 5, 6, 7, 8].map((n) => (
                    <HeadCell key={n}>
                      <RoundBadge>{n}</RoundBadge>
                      第{n}轮
                    </HeadCell>
                  ))}
                </RowGrid>
                {items.map((it) => (
                  <RowGrid key={it.title} $h={it.height}>
                    <ItemInfo it={it} />
                    <Cell $top={it.top} $warm>
                      {it.active ? (
                        <>
                          <ActiveLabel>{it.active.label}</ActiveLabel>
                          <ActiveRow>
                            <RoundCard r={it.active.round} />
                            <NotesPanel person={it.active.person} />
                          </ActiveRow>
                        </>
                      ) : (
                        <EmptyActive>
                          <Tick w={16} h={18} c="#10b981" sw={2} />
                          暂无处理中
                        </EmptyActive>
                      )}
                    </Cell>
                    {Array.from({ length: 8 }, (_, i) => (
                      <Cell key={i} $top={it.top}>
                        {it.rounds[i] ? <RoundCard r={it.rounds[i]} /> : <EmptyRound />}
                      </Cell>
                    ))}
                  </RowGrid>
                ))}
              </Table>
              <SideThumb />
            </BoardBody>
          </Board>
        </Main>
        <DrawerShadow />
        <PageScroll>
          <PageThumb />
        </PageScroll>
      </Page>
    </>
  );
}
